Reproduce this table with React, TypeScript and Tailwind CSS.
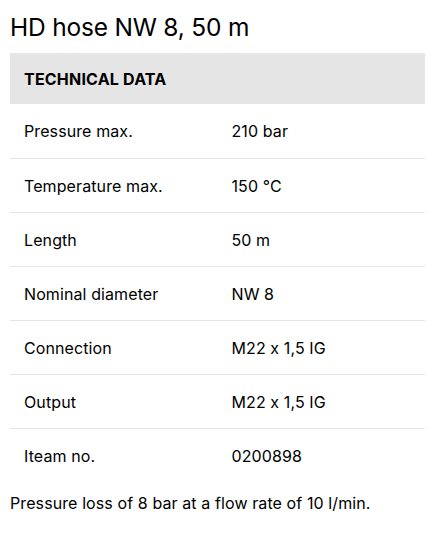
const rows = [
  { label: "Pressure max.", value: "210 bar" },
  { label: "Temperature max.", value: "150 °C" },
  { label: "Length", value: "50 m" },
  { label: "Nominal diameter", value: "NW 8" },
  { label: "Connection", value: "M22 x 1,5 IG" },
  { label: "Output", value: "M22 x 1,5 IG" },
  { label: "Iteam no.", value: "0200898" },
];

export default function App() {
  return (
    <div className="bg-white px-[10px] pt-[11px] font-['Inter',sans-serif] text-black [font-feature-settings:'calt'_0]">
      <h1 className="text-[24.5px] leading-[32px] font-normal tracking-[-0.2px]">
        HD hose NW 8, 50 m
      </h1>

      <table className="mt-[10px] w-full border-collapse text-[16px]">
        <thead>
          <tr className="bg-[#e5e5e5]">
            <th
              colSpan={2}
              className="h-[51px] px-[14px] pt-px text-left text-[16px] font-bold tracking-[0.2px]"
            >
              TECHNICAL DATA
            </th>
          </tr>
        </thead>
        <tbody>
          {rows.map((row, i) => (
            <tr
              key={row.label}
              className={i < rows.length - 1 ? "border-b border-[#e5e5e5]" : ""}
            >
              <td className="h-[54px] w-1/2 px-[14px] pt-px align-middle tracking-[0.1px]">{row.label}</td>
              <td className="h-[54px] w-1/2 px-[14px] pt-px align-middle tracking-[0.1px]">{row.value}</td>
            </tr>
          ))}
        </tbody>
      </table>

      <p className="mt-[9px] text-[16px] leading-[24px] tracking-[0.1px]">
        Pressure loss of 8 bar at a flow rate of 10 l/min.
      </p>
    </div>
  );
}
